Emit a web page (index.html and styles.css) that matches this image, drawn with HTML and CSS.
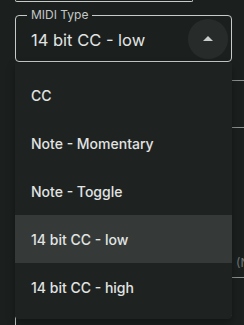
FILE: index.html
```html
<!DOCTYPE html>
<html lang="en">
<head>
    <meta charset="UTF-8">
    <meta name="viewport" content="width=device-width, initial-scale=1.0">
    <title>MIDI Type</title>
    <link rel="stylesheet" href="styles.css">
</head>
<body>
    <div class="page">
        <div class="prev-field"></div>

        <div class="field">
            <span class="field-label">MIDI Type</span>
            <span class="field-value">14 bit CC - low</span>
            <button class="toggle" aria-label="Close">
                <svg width="10" height="5" viewBox="0 0 10 5"><path d="M0 5 L5 0 L10 5 Z" fill="#c9cdcc"/></svg>
            </button>
        </div>

        <div class="behind">
            <div class="rule rule-1"></div>
            <div class="rule rule-2"></div>
            <div class="hint">(Note</div>
            <div class="rule rule-3"></div>
            <div class="next-field"></div>
        </div>

        <ul class="menu">
            <li>CC</li>
            <li>Note - Momentary</li>
            <li>Note - Toggle</li>
            <li class="selected">14 bit CC - low</li>
            <li>14 bit CC - high</li>
        </ul>
    </div>
</body>
</html>
```

FILE: styles.css
```css
* {
    margin: 0;
    padding: 0;
    box-sizing: border-box;
}

:root {
    --bg: #1b201f;
    --menu-bg: #1e2322;
    --selected: #353a39;
    --circle: #272c2b;
    --border: #c6cac9;
    --text: #e2e4e3;
    --label: #c3c7c6;
    --rule: #8c908f;
}

body {
    background-color: var(--bg);
    font-family: Inter, "Noto Sans", sans-serif;
    color: var(--text);
    width: 244px;
    height: 325px;
    overflow: hidden;
}

.page {
    position: relative;
    padding-left: 15px;
    height: 325px;
    overflow: hidden;
}

/* Bottom of the field above */
.prev-field {
    width: 178px;
    height: 2px;
    border: 1px solid var(--border);
    border-top: none;
    border-radius: 0 0 4px 4px;
}

/* MIDI Type select */
.field {
    position: relative;
    margin-top: 13px;
    width: 217px;
    height: 47px;
    border: 1px solid var(--border);
    border-radius: 4px;
    display: flex;
    align-items: center;
    padding-left: 15px;
}

.field-label {
    position: absolute;
    top: -7px;
    left: 11px;
    padding: 0 4px;
    background-color: var(--bg);
    font-size: 12px;
    line-height: 12px;
    color: var(--label);
}

.field-value {
    font-size: 16.5px;
    padding-top: 2px;
    flex: 1;
}

.toggle {
    width: 40px;
    height: 40px;
    margin-right: 3px;
    border-radius: 50%;
    border: none;
    background-color: var(--circle);
    display: flex;
    align-items: center;
    justify-content: center;
}

/* Things behind the popup */
.behind {
    display: flex;
    flex-direction: column;
}

.rule {
    height: 1px;
    background-color: var(--rule);
}

.rule-1 {
    margin-top: 18px;
}

.rule-2 {
    margin-top: 46px;
}

.hint {
    margin-top: 129px;
    padding-left: 221px;
    font-size: 12px;
    line-height: 12px;
    color: #717574;
    white-space: nowrap;
}

.rule-3 {
    margin-top: 8px;
}

.next-field {
    margin-top: 37px;
    width: 217px;
    height: 20px;
    border-left: 1px solid var(--border);
    border-top: 1px solid var(--border);
    border-radius: 4px 0 0 0;
}

/* Popup menu */
.menu {
    position: absolute;
    top: 63px;
    left: 15px;
    width: 217px;
    list-style: none;
    padding: 8px 0;
    background-color: var(--menu-bg);
    border-radius: 0 0 4px 4px;
    box-shadow: 0 4px 8px rgba(0, 0, 0, 0.35);
}

.menu li {
    height: 48px;
    display: flex;
    align-items: center;
    padding-left: 16px;
    font-size: 14px;
    font-weight: 500;
}

.menu li.selected {
    background-color: var(--selected);
}
```
